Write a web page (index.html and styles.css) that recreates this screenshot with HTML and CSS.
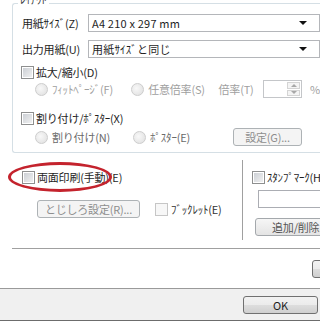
FILE: index.html
```html
<!DOCTYPE html>
<html lang="ja">
<head>
    <meta charset="UTF-8">
    <title>ページ設定</title>
    <link rel="stylesheet" href="styles.css">
</head>
<body>
    <div class="panel">
        <fieldset class="group">
            <legend>ﾚｲｱｳﾄ</legend>
            <div class="field-row">
                <span class="field-label">用紙ｻｲｽﾞ(Z)</span>
                <div class="combo"><span class="combo-text">A4 210 x 297 mm</span><span class="arrow"></span></div>
            </div>
            <div class="field-row second">
                <span class="field-label">出力用紙(U)</span>
                <div class="combo"><span class="combo-text">用紙ｻｲｽﾞと同じ</span><span class="arrow"></span></div>
            </div>
            <div class="check-row scale">
                <span class="check"></span><span>拡大/縮小(D)</span>
            </div>
            <div class="radio-row fit">
                <span class="radio-item w98"><span class="radio"></span>ﾌｨｯﾄﾍﾟｰｼﾞ(F)</span>
                <span class="radio-item w89"><span class="radio"></span>任意倍率(S)</span>
                <span class="spin-label">倍率(T)</span>
                <div class="spin">
                    <div class="spin-buttons">
                        <span class="spin-btn up"></span>
                        <span class="spin-btn down"></span>
                    </div>
                </div>
                <span class="unit">%</span>
            </div>
            <div class="check-row poster">
                <span class="check"></span><span>割り付け/ﾎﾟｽﾀｰ(X)</span>
            </div>
            <div class="radio-row layout">
                <span class="radio-item w98 dark"><span class="radio"></span>割り付け(N)</span>
                <span class="radio-item w100 dark"><span class="radio"></span>ﾎﾟｽﾀｰ(E)</span>
                <button class="btn disabled setting">設定(G)...</button>
            </div>
        </fieldset>

        <div class="options">
            <div class="options-left">
                <div class="check-row duplex">
                    <span class="check"></span><span>両面印刷(手動)(E)</span>
                </div>
                <div class="binding-row">
                    <button class="btn disabled binding">とじしろ設定(R)...</button>
                    <span class="check off"></span><span class="booklet">ﾌﾞｯｸﾚｯﾄ(E)</span>
                </div>
            </div>
            <div class="options-right">
                <div class="check-row">
                    <span class="check"></span><span>ｽﾀﾝﾌﾟﾏｰｸ(H)</span>
                </div>
                <div class="textbox"></div>
                <button class="btn add">追加/削除...</button>
            </div>
        </div>

        <div class="separator"></div>

        <div class="reset-row">
            <button class="btn reset">初期値に戻す</button>
        </div>

        <div class="marker"></div>
    </div>
    <div class="footer">
        <button class="btn ok">OK</button>
    </div>
</body>
</html>
```

FILE: styles.css
```css
body {
    margin: 0;
    width: 320px;
    height: 321px;
    overflow: hidden;
    background: #f0f0f0;
    font-family: "Noto Sans CJK JP", sans-serif;
    font-size: 11px;
    letter-spacing: -0.2px;
    color: #1e1e1e;
    white-space: nowrap;
}
.panel {
    position: relative;
    height: 288px;
    background: #fff;
    border-bottom: 1px solid #9a9a9a;
    overflow: hidden;
}
.group {
    margin: -4px 0 0 12px;
    padding: 0 0 6px 8px;
    border: 1px solid #d5dfe5;
    border-right: none;
    border-radius: 3px 0 0 3px;
    min-inline-size: 0;
}
.group legend {
    padding: 0 2px;
    margin-left: -3px;
    height: 14px;
    line-height: 6px;
    color: #333;
}
.field-row {
    display: flex;
    align-items: center;
    height: 18px;
    margin-top: 4px;
}
.field-row.second { margin-top: 8px; }
.field-label {
    width: 70px;
    padding-left: 1px;
}
.combo {
    flex: none;
    width: 232px;
    height: 18px;
    box-sizing: border-box;
    border: 1px solid #b4b6ba;
    display: flex;
    align-items: center;
    justify-content: space-between;
    padding: 0 12px 0 3px;
}
.combo-text { letter-spacing: 0.2px; }
.arrow {
    width: 0;
    height: 0;
    border-left: 4px solid transparent;
    border-right: 4px solid transparent;
    border-top: 4px solid #111;
}
.check-row {
    display: flex;
    align-items: center;
    height: 16px;
    gap: 2px;
}
.check {
    flex: none;
    width: 13px;
    height: 13px;
    box-sizing: border-box;
    border: 1px solid #8e8f8f;
    background: linear-gradient(135deg, #c8ccd2, #f4f4f4);
    box-shadow: inset 0 0 0 1px #fff;
}
.check.off {
    border-color: #c6c6c6;
    background: #f7f7f7;
    box-shadow: none;
}
.scale { margin-top: 6px; }
.poster { margin-top: 12px; }
.radio-row {
    display: flex;
    align-items: center;
    height: 18px;
    padding-left: 14px;
    color: #a0a0a0;
}
.radio-row.layout { margin-top: 2px; }
.radio-item {
    display: flex;
    align-items: center;
    gap: 4px;
}
.radio-item.dark { color: #6a6a6a; }
.w98 { width: 98px; }
.w89 { width: 89px; }
.w100 { width: 100px; }
.radio {
    width: 11px;
    height: 11px;
    border-radius: 50%;
    border: 1px solid #cdcdcd;
    background: radial-gradient(circle at 40% 40%, #f8f8f8, #dedede);
}
.spin-label { width: 45px; }
.spin {
    width: 40px;
    height: 18px;
    box-sizing: border-box;
    border: 1px solid #c4c6c9;
    display: flex;
    justify-content: flex-end;
    padding: 1px;
}
.spin-buttons {
    width: 13px;
    display: flex;
    flex-direction: column;
    gap: 1px;
}
.spin-btn {
    flex: 1;
    border: 1px solid #d4d4d4;
    background: #f4f4f4;
    display: flex;
    align-items: center;
    justify-content: center;
}
.spin-btn::after {
    content: "";
    border-left: 3px solid transparent;
    border-right: 3px solid transparent;
}
.spin-btn.up::after { border-bottom: 3px solid #a8a8a8; }
.spin-btn.down::after { border-top: 3px solid #a8a8a8; }
.unit {
    margin-left: 8px;
    color: #a0a0a0;
}
.btn {
    font-family: inherit;
    font-size: 11px;
    letter-spacing: -0.2px;
    white-space: nowrap;
    height: 18px;
    padding: 0;
    line-height: 16px;
    border: 1px solid #707070;
    border-radius: 3px;
    background: linear-gradient(#f2f2f2 0%, #ebebeb 50%, #dddddd 51%, #cfcfcf 100%);
    color: #1e1e1e;
}
.btn.disabled {
    border-color: #adb2b5;
    background: #f4f4f4;
    color: #8d8d8d;
}
.setting { width: 69px; }
.options {
    display: flex;
    margin-left: 12px;
}
.options-left {
    flex: none;
    width: 230px;
}
.duplex {
    margin-top: 16px;
    padding-left: 10px;
}
.binding-row {
    display: flex;
    align-items: center;
    margin-top: 15px;
    padding-left: 25px;
}
.binding {
    width: 103px;
    margin-right: 15px;
}
.booklet {
    margin-left: 3px;
    color: #333;
}
.options-right {
    flex: none;
    width: 100px;
    margin-top: 7px;
    height: 80px;
    box-sizing: border-box;
    border-left: 1px solid #a0a0a0;
    box-shadow: inset 1px 0 0 #fff;
    padding: 9px 0 0 9px;
}
.textbox {
    width: 80px;
    height: 18px;
    box-sizing: border-box;
    margin: 5px 0 0 6px;
    border: 1px solid #abadb3;
}
.add {
    width: 90px;
    margin: 10px 0 0 3px;
    border-color: #a4a8ac;
    background: linear-gradient(#f6f6f6, #e4e4e4);
    color: #555;
}
.separator {
    margin: 8px 0 0 12px;
    height: 1px;
    background: #a0a0a0;
}
.reset-row {
    display: flex;
    margin-top: 11px;
}
.reset {
    flex: none;
    width: 120px;
    margin-left: 312px;
}
.marker {
    position: absolute;
    left: 8px;
    top: 162px;
    width: 98px;
    height: 24px;
    border: 3px solid #c4232d;
    border-radius: 50%;
}
.footer {
    height: 31px;
    border-bottom: 1px solid #6c6c6c;
    display: flex;
    justify-content: flex-end;
    align-items: flex-start;
    padding-right: 2px;
}
.ok {
    width: 75px;
    margin-top: 7px;
}
```
